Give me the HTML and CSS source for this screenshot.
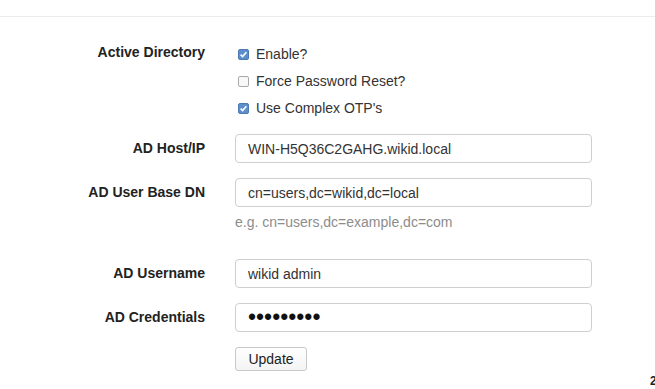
FILE: index.html
```html
<!DOCTYPE html>
<html lang="en">
<head>
  <meta charset="UTF-8" />
  <meta name="viewport" content="width=device-width, initial-scale=1.0" />
  <title>Active Directory Settings</title>
  <link rel="stylesheet" href="styles.css">
</head>
<body>
  <div class="topbar"></div>

  <form class="ad-form" onsubmit="return false;">
    <div class="form-row ad-row">
      <label class="row-label">Active Directory</label>
      <div class="checks">
        <label class="check">
          <svg class="box" width="11" height="11" viewBox="0 0 11 11"><rect x="0.5" y="0.5" width="10" height="10" rx="1.5" fill="#5d8fcd" stroke="#4c79b0"/><polyline points="2.6,5.6 4.6,7.6 8.4,3.2" fill="none" stroke="#fff" stroke-width="1.6"/></svg>
          Enable?
        </label>
        <label class="check">
          <svg class="box" width="11" height="11" viewBox="0 0 11 11"><rect x="0.5" y="0.5" width="10" height="10" rx="1.5" fill="#f8f8f8" stroke="#a9a9a9"/></svg>
          Force Password Reset?
        </label>
        <label class="check">
          <svg class="box" width="11" height="11" viewBox="0 0 11 11"><rect x="0.5" y="0.5" width="10" height="10" rx="1.5" fill="#5d8fcd" stroke="#4c79b0"/><polyline points="2.6,5.6 4.6,7.6 8.4,3.2" fill="none" stroke="#fff" stroke-width="1.6"/></svg>
          Use Complex OTP's
        </label>
      </div>
    </div>

    <div class="form-row">
      <label class="row-label" for="adHost">AD Host/IP</label>
      <input class="text-input" type="text" id="adHost" value="WIN-H5Q36C2GAHG.wikid.local" />
    </div>

    <div class="form-row with-help">
      <label class="row-label" for="adBase">AD User Base DN</label>
      <div>
        <input class="text-input" type="text" id="adBase" value="cn=users,dc=wikid,dc=local" />
        <p class="help">e.g. cn=users,dc=example,dc=com</p>
      </div>
    </div>

    <div class="form-row">
      <label class="row-label" for="adUser">AD Username</label>
      <input class="text-input" type="text" id="adUser" value="wikid admin" />
    </div>

    <div class="form-row">
      <label class="row-label" for="adPass">AD Credentials</label>
      <input class="text-input password" type="password" id="adPass" value="secret123" />
    </div>

    <div class="form-row">
      <span></span>
      <div><button class="btn" type="submit">Update</button></div>
    </div>
  </form>

  <span class="edge-mark">2</span>
</body>
</html>
```

FILE: styles.css
```css
body {
  margin: 0;
  font-family: "Liberation Sans", Arial, sans-serif;
  font-size: 14px;
  color: #333;
  background: #fff;
  position: relative;
  height: 389px;
  overflow: hidden;
}
.topbar {
  height: 16px;
  border-bottom: 1px solid #ececec;
}
.ad-form {
  padding-top: 24px;
}
.form-row {
  display: grid;
  grid-template-columns: 205px 357px;
  column-gap: 30px;
  margin-bottom: 15px;
}
.row-label {
  font-weight: bold;
  color: #222;
  text-align: right;
  line-height: 29px;
}
.ad-row {
  margin-bottom: 16px;
}
.ad-row .row-label {
  line-height: 20px;
  padding-top: 1px;
}
.checks {
  display: flex;
  flex-direction: column;
  gap: 7px;
  padding-top: 3px;
}
.check {
  display: flex;
  align-items: center;
  gap: 7px;
  line-height: 20px;
  padding-left: 3px;
}
.box {
  flex: none;
}
.text-input {
  display: block;
  width: 357px;
  height: 29px;
  box-sizing: border-box;
  border: 1px solid #cfcfcf;
  border-radius: 4px;
  padding: 0 12px;
  font-family: inherit;
  font-size: 14px;
  color: #333;
  outline: none;
}
.password {
  font-size: 23px;
  color: #111;
}
.with-help {
  margin-bottom: 27px;
}
.help {
  margin: 5px 0 0;
  line-height: 20px;
  color: #8c8c8c;
}
.btn {
  width: 72px;
  height: 24px;
  border: 1px solid #c8c8c8;
  border-radius: 3px;
  background: linear-gradient(#fff, #f4f4f4);
  font-family: inherit;
  font-size: 14px;
  color: #222;
  padding: 0;
}
.edge-mark {
  position: absolute;
  left: 650px;
  top: 374px;
  font-size: 12px;
  font-weight: bold;
  color: #222;
}
```
